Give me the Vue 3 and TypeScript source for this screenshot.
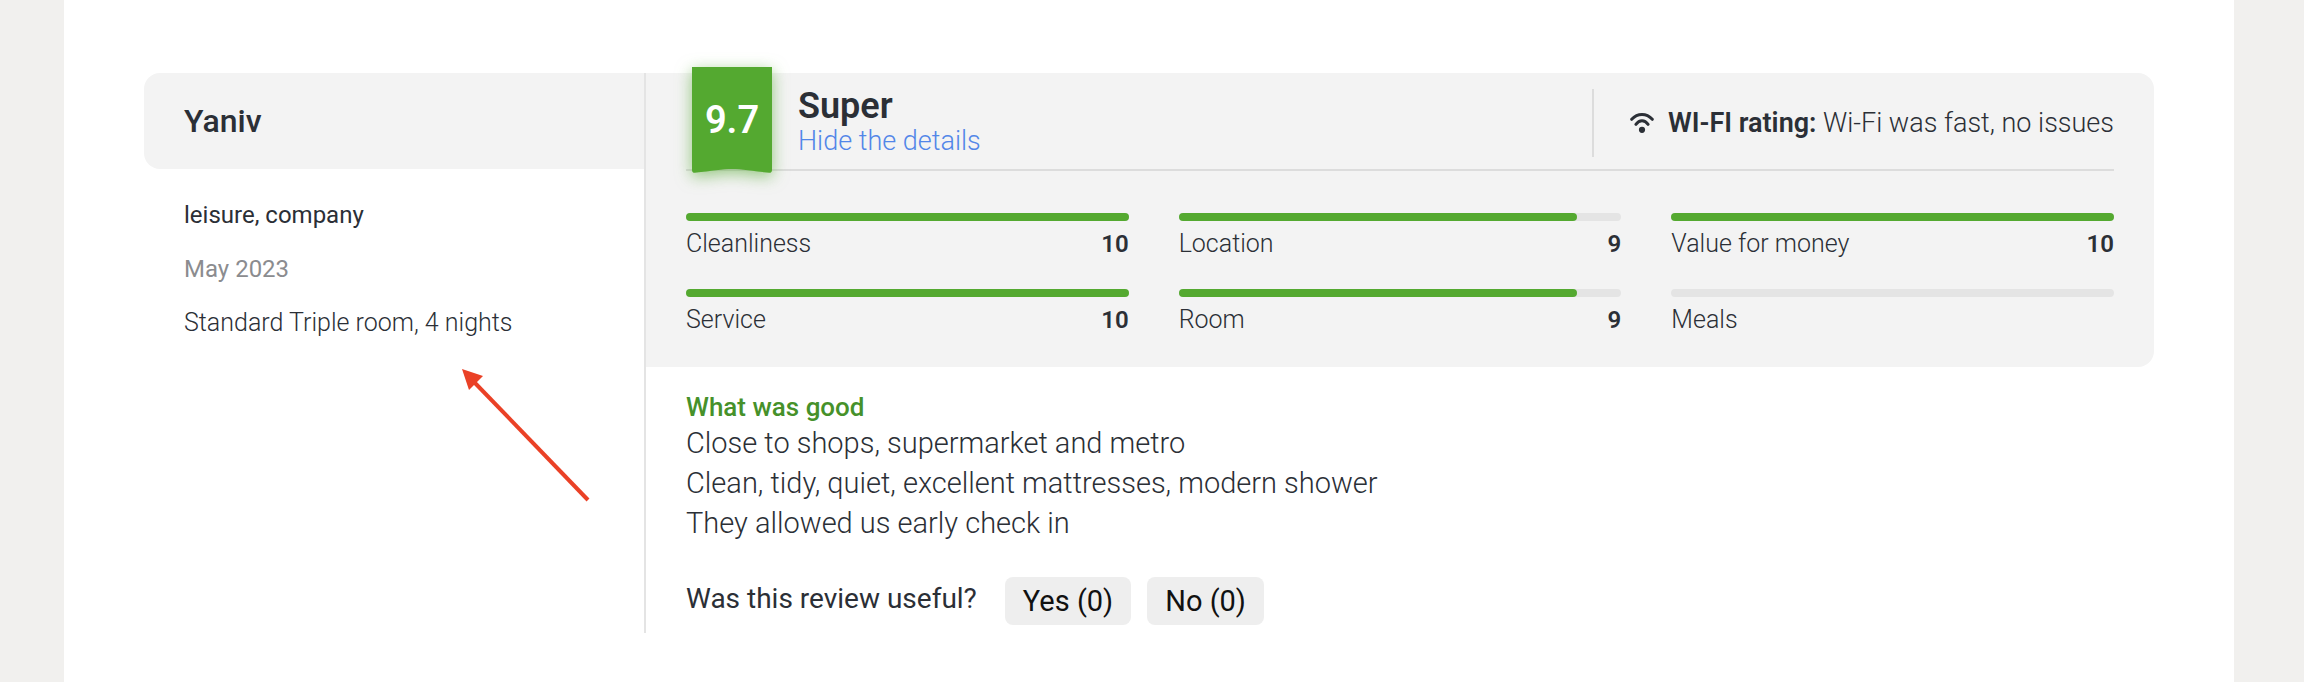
<script setup lang="ts">
interface Rating {
  label: string
  score: number | null
}

const ratings: Rating[] = [
  { label: 'Cleanliness', score: 10 },
  { label: 'Location', score: 9 },
  { label: 'Value for money', score: 10 },
  { label: 'Service', score: 10 },
  { label: 'Room', score: 9 },
  { label: 'Meals', score: null },
]

const goodPoints: string[] = [
  'Close to shops, supermarket and metro',
  'Clean, tidy, quiet, excellent mattresses, modern shower',
  'They allowed us early check in',
]
</script>

<template>
  <div class="page">
    <main class="sheet">
      <article class="review">
        <aside class="guest">
          <header class="guest-head">
            <h2 class="guest-name">Yaniv</h2>
          </header>
          <div class="stay">
            <p class="stay-type">leisure, company</p>
            <p class="stay-date">May 2023</p>
            <p class="stay-room">Standard Triple room, 4 nights</p>
          </div>
          <svg class="pointer" viewBox="0 0 130 134" aria-hidden="true">
            <path d="M13 14 L126 131" stroke="#ea4126" stroke-width="4" fill="none" />
            <path d="M0 0 L21 7 L7 21 Z" fill="#ea4126" />
          </svg>
        </aside>

        <div class="details">
          <section class="panel">
            <header class="summary">
              <div class="badge">
                <svg class="badge-shape" viewBox="0 0 80 106" aria-hidden="true">
                  <path d="M0 0H80V103Q80 106 77 105.8C60 104 50 102 40 102S20 104 3 105.8Q0 106 0 103Z" fill="#54a930" />
                </svg>
                <span class="badge-score">9.7</span>
              </div>
              <div class="verdict">
                <h3 class="verdict-title">Super</h3>
                <a class="toggle" href="#ratings">Hide the details</a>
              </div>
              <div class="wifi">
                <svg class="wifi-icon" viewBox="0 0 24 24" aria-hidden="true">
                  <g fill="none" stroke="#2b2f36" stroke-width="3" stroke-linecap="round">
                    <path d="M1.7 8.3C7.6 2 16.4 2 22.3 8.3" />
                    <path d="M5.9 13.4C9.4 8.5 14.6 8.5 18.1 13.4" />
                  </g>
                  <circle cx="12" cy="18.8" r="3.1" fill="#2b2f36" />
                </svg>
                <p class="wifi-text"><b>WI-FI rating:</b> Wi-Fi was fast, no issues</p>
              </div>
            </header>

            <ul id="ratings" class="ratings">
              <li v-for="item in ratings" :key="item.label" class="rating">
                <div class="track">
                  <div v-if="item.score !== null" class="fill" :style="{ width: item.score * 10 + '%' }"></div>
                </div>
                <div class="rating-row">
                  <span class="rating-label">{{ item.label }}</span>
                  <b v-if="item.score !== null">{{ item.score }}</b>
                </div>
              </li>
            </ul>
          </section>

          <section class="feedback">
            <h4 class="good-title">What was good</h4>
            <p v-for="point in goodPoints" :key="point" class="good-line">{{ point }}</p>
            <div class="useful">
              <span class="question">Was this review useful?</span>
              <button type="button" class="vote">Yes (0)</button>
              <button type="button" class="vote">No (0)</button>
            </div>
          </section>
        </div>
      </article>
    </main>
  </div>
</template>

<style>
body {
  margin: 0;
  background: #f1f0ee;
}
</style>

<style scoped>
.page {
  box-sizing: border-box;
  min-height: 100vh;
  display: flex;
  padding: 0 70px 0 64px;
  font-family: Roboto, "Liberation Sans", sans-serif;
  font-weight: 300;
  font-size: 24px;
  line-height: 32px;
  color: #2b2f36;
}
.sheet {
  box-sizing: border-box;
  flex: 1;
  padding: 73px 80px 40px;
  background: #fff;
}
.review {
  display: grid;
  grid-template-columns: 500px 1fr;
}
h2, h3, h4, p, ul {
  margin: 0;
  padding: 0;
}
b {
  font-weight: 600;
}
.guest {
  position: relative;
}
.guest-head {
  display: flex;
  align-items: center;
  height: 96px;
  padding: 0 40px;
  border-radius: 16px 0 0 16px;
  background: #f3f3f3;
}
.guest-name {
  font-size: 32px;
  font-weight: 500;
  line-height: 40px;
}
.stay {
  display: grid;
  gap: 22px;
  padding: 30px 40px;
}
.stay-type {
  font-weight: 400;
}
.stay-date {
  font-weight: 400;
  color: #8b8c8f;
}
.stay-room,
.rating-label {
  font-size: 25px;
}
.pointer {
  position: absolute;
  left: 318px;
  top: 296px;
  width: 130px;
  height: 134px;
}
.details {
  border-left: 2px solid #e4e4e4;
}
.panel {
  padding: 0 40px 31px;
  border-radius: 0 16px 16px 0;
  background: #f3f3f3;
}
.summary {
  position: relative;
  display: flex;
  justify-content: space-between;
  align-items: center;
  height: 96px;
  padding-left: 112px;
  border-bottom: 2px solid #dcdcdc;
}
.badge {
  position: absolute;
  left: 6px;
  top: -6px;
  width: 80px;
  height: 106px;
  display: flex;
  align-items: center;
  justify-content: center;
}
.badge-shape {
  position: absolute;
  inset: 0;
  overflow: visible;
  filter: drop-shadow(0 4px 8px rgba(84, 169, 48, 0.6));
}
.badge-score {
  position: relative;
  color: #fff;
  font-size: 38px;
  font-weight: 600;
}
.verdict {
  padding-top: 2px;
}
.verdict-title {
  font-size: 36px;
  font-weight: 600;
  line-height: 38px;
}
.toggle {
  display: block;
  font-size: 27px;
  line-height: 32px;
  color: #5286e8;
  text-decoration: none;
}
.wifi {
  display: flex;
  align-items: center;
  gap: 14px;
  height: 68px;
  margin-top: 4px;
  padding-left: 36px;
  border-left: 2px solid #dcdcdc;
}
.wifi-icon {
  width: 24px;
  height: 24px;
}
.wifi-text {
  font-size: 27px;
}
.ratings {
  display: grid;
  grid-template-columns: repeat(3, 1fr);
  gap: 29px 50px;
  padding-top: 42px;
  list-style: none;
}
.track {
  height: 8px;
  border-radius: 4px;
  background: #e4e4e4;
}
.fill {
  height: 8px;
  border-radius: 4px;
  background: #54a930;
}
.rating-row {
  display: flex;
  justify-content: space-between;
  padding-top: 7px;
}
.feedback {
  padding: 24px 40px 8px;
}
.good-title {
  font-size: 26px;
  font-weight: 500;
  line-height: 32px;
  color: #46912a;
}
.good-line {
  font-size: 29px;
  line-height: 40px;
}
.useful {
  display: flex;
  align-items: center;
  gap: 16px;
  padding-top: 34px;
}
.question {
  padding: 0 12px 4px 0;
  font-size: 28px;
  font-weight: 400;
}
.vote {
  height: 48px;
  padding: 0 18px;
  border: 0;
  border-radius: 8px;
  background: #eee;
  color: #111;
  font-family: inherit;
  font-size: 29px;
  font-weight: 400;
}
</style>
